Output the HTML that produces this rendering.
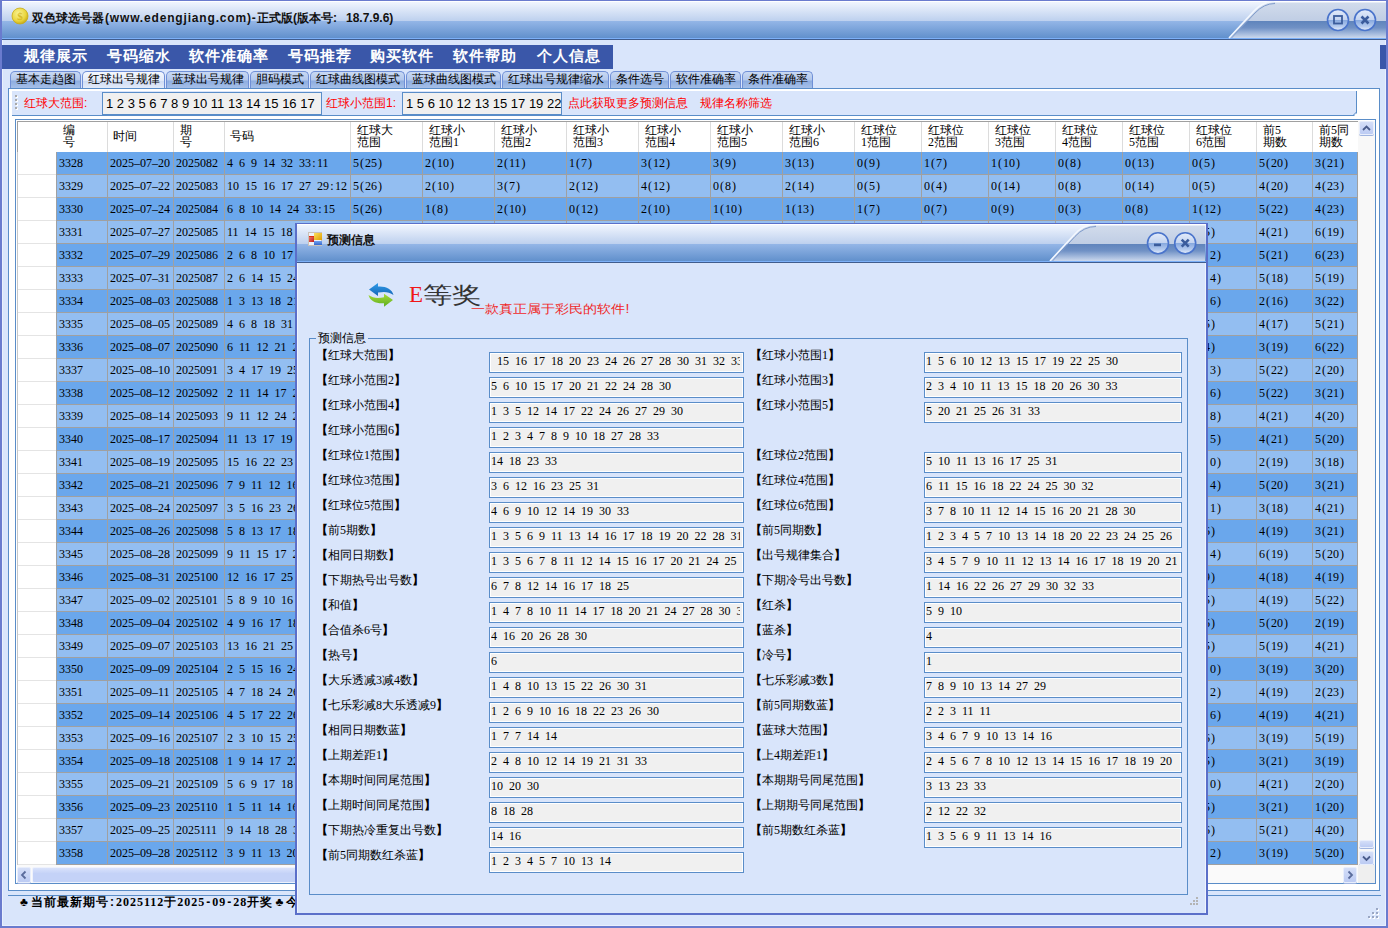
<!DOCTYPE html><html><head><meta charset="utf-8"><title>双色球选号器</title><style>
html,body{margin:0;padding:0;}
em{font-style:normal;font-family:"Liberation Serif",serif;}
body{width:1388px;height:928px;overflow:hidden;position:relative;background:#D9E5FB;font-family:"Liberation Sans",sans-serif;font-size:12px;color:#000;}
div,span.s,span.t,span.m,span.b{position:absolute;box-sizing:border-box;white-space:nowrap;}
span.s{font-family:"Liberation Serif",serif;font-size:12px;line-height:14px;height:14px;}
span.t{font-family:"Liberation Sans",sans-serif;font-size:12px;line-height:14px;}
i{font-style:normal;display:inline-block;width:6px;text-align:center;}
u{text-decoration:none;display:inline-block;width:12px;text-align:center;}
.tab{top:71px;height:18px;border:1px solid #6F8FD6;border-bottom:none;border-radius:5px 5px 0 0;background:linear-gradient(#C9D9F3 0%,#B3C8EC 45%,#8FAEE0 55%,#A9C2EA 100%);font-size:12px;line-height:15px;text-align:center;}
.tab.sel{background:linear-gradient(#F4F7FD 0%,#E2EAF9 50%,#CFDCF4 55%,#E6EDFA 100%);}
.inp{background:#F0F0F0;border:1px solid #5A8DC8;box-shadow:inset 0 0 0 1px #fff;height:21px;overflow:hidden;font-family:"Liberation Serif",serif;font-size:12px;line-height:16px;padding-left:1px;}
.inp b{font-weight:normal;display:block;overflow:hidden;height:19px;}
.lab{font-family:"Liberation Sans",sans-serif;font-size:12px;line-height:14px;height:14px;}
.hd{font-family:"Liberation Sans",sans-serif;font-size:12px;line-height:12px;white-space:normal;}
</style></head><body>
<div style="left:0px;top:0px;width:1388px;height:928px;border:2px solid #6A7BCE;border-top-width:1px;"></div>
<div style="left:2px;top:40px;width:1px;height:886px;background:#E9F0FD;"></div>
<div style="left:1385px;top:40px;width:1px;height:886px;background:#E9F0FD;"></div>
<div style="left:2px;top:925px;width:1384px;height:1px;background:#E9F0FD;"></div>
<div style="left:2px;top:1px;width:1384px;height:1px;background:#fff;"></div>
<div style="left:2px;top:2px;width:1384px;height:19px;background:linear-gradient(#F0F5FE,#BDD0EE);"></div>
<div style="left:2px;top:21px;width:1384px;height:17px;background:linear-gradient(#94B6E7,#6190CC);"></div>
<div style="left:2px;top:38px;width:1384px;height:1px;background:#7CB0F8;"></div>
<div style="left:2px;top:39px;width:1384px;height:1px;background:#3F5C8E;"></div>
<svg style="position:absolute;left:1220px;top:1px" width="166" height="38" viewBox="0 0 166 38">
<defs>
<linearGradient id="pu" x1="0" y1="0" x2="0" y2="1"><stop offset="0" stop-color="#D2DCEC"/><stop offset="1" stop-color="#AFC0DD"/></linearGradient>
<linearGradient id="pl" x1="0" y1="0" x2="0" y2="1"><stop offset="0" stop-color="#5F84BC"/><stop offset="0.4" stop-color="#7091C5"/><stop offset="0.78" stop-color="#A9BEDF"/><stop offset="1" stop-color="#CCD8EC"/></linearGradient>
<radialGradient id="bt" cx="0.5" cy="0.3" r="0.8"><stop offset="0" stop-color="#E4ECFA"/><stop offset="0.55" stop-color="#B5C8EA"/><stop offset="1" stop-color="#8FABDD"/></radialGradient>
<linearGradient id="bb" x1="0" y1="0" x2="0" y2="1"><stop offset="0" stop-color="#E3ECFA"/><stop offset="0.5" stop-color="#C3D3F0"/><stop offset="0.5" stop-color="#86A8DE"/><stop offset="0.8" stop-color="#B4CAEE"/><stop offset="1" stop-color="#E8F0FC"/></linearGradient>
</defs>
<path d="M10 37 L34 11 Q43 1 54 1 L166 1 L166 20 L27 20 Z" fill="url(#pu)"/>
<path d="M10 37 L27 20 L166 20 L166 37 Z" fill="url(#pl)"/>
<path d="M9 37 L34 10 Q43 0.5 54 0.5" fill="none" stroke="#F4F8FF" stroke-width="1.6"/>
<path d="M11.5 37 L35 12 Q44 2.5 55 2.5" fill="none" stroke="#7F9BCB" stroke-width="1"/>
<path d="M55 1.5 L166 1.5" fill="none" stroke="#E6ECF6" stroke-width="1"/>
<circle cx="118" cy="19" r="10.5" fill="url(#bb)" stroke="#4A74CB" stroke-width="1.6"/>
<circle cx="145" cy="19" r="10.5" fill="url(#bb)" stroke="#4A74CB" stroke-width="1.6"/>
<rect x="114" y="15" width="8" height="7.5" fill="none" stroke="#3B5C9C" stroke-width="1.8"/>
<path d="M141.5 15.5 L148.5 22.5 M148.5 15.5 L141.5 22.5" stroke="#3B5C9C" stroke-width="2.6"/>
</svg>
<svg style="position:absolute;left:11px;top:7px" width="18" height="18" viewBox="0 0 18 18">
<defs><radialGradient id="cg" cx="0.4" cy="0.35" r="0.7"><stop offset="0" stop-color="#F8F294"/><stop offset="0.65" stop-color="#EAD63E"/><stop offset="1" stop-color="#C2A412"/></radialGradient></defs>
<circle cx="9" cy="9" r="8" fill="url(#cg)" stroke="#C8AC18" stroke-width="0.8"/>
<text x="9" y="13" font-family="Liberation Serif" font-size="11" font-weight="bold" text-anchor="middle" fill="#D2B420" fill-opacity="0.85">$</text></svg>
<span class="t" style="left:32px;top:11px;font-weight:bold;color:#111;">双色球选号器</span>
<span class="t" style="left:105px;top:11px;font-weight:bold;color:#111;letter-spacing:0.83px;">(www.edengjiang.com)-</span>
<span class="t" style="left:257px;top:11px;font-weight:bold;color:#111;">正式版</span>
<span class="t" style="left:293px;top:11px;font-weight:bold;color:#111;">(版本号:</span>
<span class="t" style="left:346px;top:11px;font-weight:bold;color:#111;">18.7.9.6)</span>
<div style="left:2px;top:45px;width:611px;height:24px;background:#3A57A9;"></div>
<div style="left:1380px;top:45px;width:6px;height:24px;background:#3A57A9;"></div>
<span class="m" style="left:24px;top:46px;font-family:'Liberation Sans',sans-serif;font-weight:bold;font-size:15px;line-height:20px;color:#fff;letter-spacing:1px;">规律展示</span>
<span class="m" style="left:107px;top:46px;font-family:'Liberation Sans',sans-serif;font-weight:bold;font-size:15px;line-height:20px;color:#fff;letter-spacing:1px;">号码缩水</span>
<span class="m" style="left:189px;top:46px;font-family:'Liberation Sans',sans-serif;font-weight:bold;font-size:15px;line-height:20px;color:#fff;letter-spacing:1px;">软件准确率</span>
<span class="m" style="left:288px;top:46px;font-family:'Liberation Sans',sans-serif;font-weight:bold;font-size:15px;line-height:20px;color:#fff;letter-spacing:1px;">号码推荐</span>
<span class="m" style="left:370px;top:46px;font-family:'Liberation Sans',sans-serif;font-weight:bold;font-size:15px;line-height:20px;color:#fff;letter-spacing:1px;">购买软件</span>
<span class="m" style="left:453px;top:46px;font-family:'Liberation Sans',sans-serif;font-weight:bold;font-size:15px;line-height:20px;color:#fff;letter-spacing:1px;">软件帮助</span>
<span class="m" style="left:537px;top:46px;font-family:'Liberation Sans',sans-serif;font-weight:bold;font-size:15px;line-height:20px;color:#fff;letter-spacing:1px;">个人信息</span>
<div class="tab" style="left:10px;width:71px;">基本走趋图</div>
<div class="tab sel" style="left:82px;width:83px;">红球出号规律</div>
<div class="tab" style="left:166px;width:83px;">蓝球出号规律</div>
<div class="tab" style="left:250px;width:59px;">胆码模式</div>
<div class="tab" style="left:310px;width:95px;">红球曲线图模式</div>
<div class="tab" style="left:406px;width:95px;">蓝球曲线图模式</div>
<div class="tab" style="left:502px;width:107px;">红球出号规律缩水</div>
<div class="tab" style="left:610px;width:59px;">条件选号</div>
<div class="tab" style="left:670px;width:71px;">软件准确率</div>
<div class="tab" style="left:742px;width:71px;">条件准确率</div>
<div style="left:8px;top:88px;width:1372px;height:803px;background:#fff;border:1px solid #5A8DC8;"></div>
<div style="left:12px;top:91px;width:1345px;height:25px;background:#D9E5FB;border-right:1px solid #5A8DC8;border-bottom:1px solid #5A8DC8;"></div>
<svg style="position:absolute;left:1352px;top:111px" width="6" height="6" viewBox="0 0 6 6"><path d="M6 1 L6 6 L1 6 Z" fill="#fff"/><path d="M4.5 1 L1 4.5" stroke="#5A8DC8" stroke-width="1" fill="none"/></svg>
<div style="left:16px;top:96px;width:2px;height:2px;background:#fff;"></div>
<div style="left:15px;top:95px;width:2px;height:2px;background:#A9A9A9;"></div>
<div style="left:16px;top:100px;width:2px;height:2px;background:#fff;"></div>
<div style="left:15px;top:99px;width:2px;height:2px;background:#A9A9A9;"></div>
<div style="left:16px;top:104px;width:2px;height:2px;background:#fff;"></div>
<div style="left:15px;top:103px;width:2px;height:2px;background:#A9A9A9;"></div>
<div style="left:16px;top:108px;width:2px;height:2px;background:#fff;"></div>
<div style="left:15px;top:107px;width:2px;height:2px;background:#A9A9A9;"></div>
<span class="t" style="left:24px;top:96px;color:#F00;">红球大范围:</span>
<div style="left:102px;top:92px;width:220px;height:23px;background:#F0F0F0;border:1px solid #5A8DC8;font-size:13px;line-height:21px;padding-left:3px;">1 2 3 5 6 7 8 9 10 11 13 14 15 16 17</div>
<span class="t" style="left:326px;top:96px;color:#F00;">红球小范围1:</span>
<div style="left:402px;top:92px;width:160px;height:23px;background:#F0F0F0;border:1px solid #5A8DC8;font-size:13px;line-height:21px;padding-left:3px;overflow:hidden;">1 5 6 10 12 13 15 17 19 22 25</div>
<span class="t" style="left:568px;top:96px;color:#F00;">点此获取更多预测信息</span>
<span class="t" style="left:700px;top:96px;color:#F00;">规律名称筛选</span>
<div style="left:15px;top:119px;width:1361px;height:765px;border:1px solid #5A8DC8;background:#fff;"></div>
<div style="left:17px;top:121px;width:1341px;height:1px;background:#A0A0A0;"></div>
<div style="left:17px;top:121px;width:1px;height:31px;background:#A0A0A0;"></div>
<div style="left:17px;top:152px;width:1px;height:713px;background:#C8C8C8;"></div>
<div class="hd" style="left:63px;top:124px;width:12px;">编号</div>
<div class="hd" style="left:113px;top:130px;">时间</div>
<div class="hd" style="left:180px;top:124px;width:12px;">期号</div>
<div class="hd" style="left:230px;top:130px;">号码</div>
<div class="hd" style="left:357px;top:124px;">红球大<br>范围</div>
<div class="hd" style="left:429px;top:124px;">红球小<br>范围<em>1</em></div>
<div class="hd" style="left:501px;top:124px;">红球小<br>范围<em>2</em></div>
<div class="hd" style="left:573px;top:124px;">红球小<br>范围<em>3</em></div>
<div class="hd" style="left:645px;top:124px;">红球小<br>范围<em>4</em></div>
<div class="hd" style="left:717px;top:124px;">红球小<br>范围<em>5</em></div>
<div class="hd" style="left:789px;top:124px;">红球小<br>范围<em>6</em></div>
<div class="hd" style="left:861px;top:124px;">红球位<br><em>1</em>范围</div>
<div class="hd" style="left:928px;top:124px;">红球位<br><em>2</em>范围</div>
<div class="hd" style="left:995px;top:124px;">红球位<br><em>3</em>范围</div>
<div class="hd" style="left:1062px;top:124px;">红球位<br><em>4</em>范围</div>
<div class="hd" style="left:1129px;top:124px;">红球位<br><em>5</em>范围</div>
<div class="hd" style="left:1196px;top:124px;">红球位<br><em>6</em>范围</div>
<div class="hd" style="left:1263px;top:124px;">前<em>5</em><br>期数</div>
<div class="hd" style="left:1319px;top:124px;">前<em>5</em>同<br>期数</div>
<div style="left:107px;top:122px;width:1px;height:30px;background:#DCDCDC;"></div>
<div style="left:173px;top:122px;width:1px;height:30px;background:#DCDCDC;"></div>
<div style="left:224px;top:122px;width:1px;height:30px;background:#DCDCDC;"></div>
<div style="left:350px;top:122px;width:1px;height:30px;background:#DCDCDC;"></div>
<div style="left:422px;top:122px;width:1px;height:30px;background:#DCDCDC;"></div>
<div style="left:494px;top:122px;width:1px;height:30px;background:#DCDCDC;"></div>
<div style="left:566px;top:122px;width:1px;height:30px;background:#DCDCDC;"></div>
<div style="left:638px;top:122px;width:1px;height:30px;background:#DCDCDC;"></div>
<div style="left:710px;top:122px;width:1px;height:30px;background:#DCDCDC;"></div>
<div style="left:782px;top:122px;width:1px;height:30px;background:#DCDCDC;"></div>
<div style="left:854px;top:122px;width:1px;height:30px;background:#DCDCDC;"></div>
<div style="left:921px;top:122px;width:1px;height:30px;background:#DCDCDC;"></div>
<div style="left:988px;top:122px;width:1px;height:30px;background:#DCDCDC;"></div>
<div style="left:1055px;top:122px;width:1px;height:30px;background:#DCDCDC;"></div>
<div style="left:1122px;top:122px;width:1px;height:30px;background:#DCDCDC;"></div>
<div style="left:1189px;top:122px;width:1px;height:30px;background:#DCDCDC;"></div>
<div style="left:1256px;top:122px;width:1px;height:30px;background:#DCDCDC;"></div>
<div style="left:1312px;top:122px;width:1px;height:30px;background:#DCDCDC;"></div>
<div style="left:56px;top:152px;width:1302px;height:23px;background:#6AA7EC;border-bottom:1px solid #A0A0A0;"></div>
<div style="left:18px;top:174px;width:38px;height:1px;background:#E4E4E4;"></div>
<span class="s" style="left:59px;top:156px;">3328</span>
<span class="s" style="left:110px;top:156px;">2025–07–20</span>
<span class="s" style="left:176px;top:156px;">2025082</span>
<span class="s" style="left:227px;top:156px;">4<i>&nbsp;</i>6<i>&nbsp;</i>9<i>&nbsp;</i>14<i>&nbsp;</i>32<i>&nbsp;</i>33<i>:</i>11</span>
<span class="s" style="left:353px;top:156px;">5<i>(</i>25<i>)</i></span>
<span class="s" style="left:425px;top:156px;">2<i>(</i>10<i>)</i></span>
<span class="s" style="left:497px;top:156px;">2<i>(</i>11<i>)</i></span>
<span class="s" style="left:569px;top:156px;">1<i>(</i>7<i>)</i></span>
<span class="s" style="left:641px;top:156px;">3<i>(</i>12<i>)</i></span>
<span class="s" style="left:713px;top:156px;">3<i>(</i>9<i>)</i></span>
<span class="s" style="left:785px;top:156px;">3<i>(</i>13<i>)</i></span>
<span class="s" style="left:857px;top:156px;">0<i>(</i>9<i>)</i></span>
<span class="s" style="left:924px;top:156px;">1<i>(</i>7<i>)</i></span>
<span class="s" style="left:991px;top:156px;">1<i>(</i>10<i>)</i></span>
<span class="s" style="left:1058px;top:156px;">0<i>(</i>8<i>)</i></span>
<span class="s" style="left:1125px;top:156px;">0<i>(</i>13<i>)</i></span>
<span class="s" style="left:1192px;top:156px;">0<i>(</i>5<i>)</i></span>
<span class="s" style="left:1259px;top:156px;">5<i>(</i>20<i>)</i></span>
<span class="s" style="left:1315px;top:156px;">3<i>(</i>21<i>)</i></span>
<div style="left:56px;top:175px;width:1302px;height:23px;background:#93BEF1;border-bottom:1px solid #A0A0A0;"></div>
<div style="left:18px;top:197px;width:38px;height:1px;background:#E4E4E4;"></div>
<span class="s" style="left:59px;top:179px;">3329</span>
<span class="s" style="left:110px;top:179px;">2025–07–22</span>
<span class="s" style="left:176px;top:179px;">2025083</span>
<span class="s" style="left:227px;top:179px;">10<i>&nbsp;</i>15<i>&nbsp;</i>16<i>&nbsp;</i>17<i>&nbsp;</i>27<i>&nbsp;</i>29<i>:</i>12</span>
<span class="s" style="left:353px;top:179px;">5<i>(</i>26<i>)</i></span>
<span class="s" style="left:425px;top:179px;">2<i>(</i>10<i>)</i></span>
<span class="s" style="left:497px;top:179px;">3<i>(</i>7<i>)</i></span>
<span class="s" style="left:569px;top:179px;">2<i>(</i>12<i>)</i></span>
<span class="s" style="left:641px;top:179px;">4<i>(</i>12<i>)</i></span>
<span class="s" style="left:713px;top:179px;">0<i>(</i>8<i>)</i></span>
<span class="s" style="left:785px;top:179px;">2<i>(</i>14<i>)</i></span>
<span class="s" style="left:857px;top:179px;">0<i>(</i>5<i>)</i></span>
<span class="s" style="left:924px;top:179px;">0<i>(</i>4<i>)</i></span>
<span class="s" style="left:991px;top:179px;">0<i>(</i>14<i>)</i></span>
<span class="s" style="left:1058px;top:179px;">0<i>(</i>8<i>)</i></span>
<span class="s" style="left:1125px;top:179px;">0<i>(</i>14<i>)</i></span>
<span class="s" style="left:1192px;top:179px;">0<i>(</i>5<i>)</i></span>
<span class="s" style="left:1259px;top:179px;">4<i>(</i>20<i>)</i></span>
<span class="s" style="left:1315px;top:179px;">4<i>(</i>23<i>)</i></span>
<div style="left:56px;top:198px;width:1302px;height:23px;background:#6AA7EC;border-bottom:1px solid #A0A0A0;"></div>
<div style="left:18px;top:220px;width:38px;height:1px;background:#E4E4E4;"></div>
<span class="s" style="left:59px;top:202px;">3330</span>
<span class="s" style="left:110px;top:202px;">2025–07–24</span>
<span class="s" style="left:176px;top:202px;">2025084</span>
<span class="s" style="left:227px;top:202px;">6<i>&nbsp;</i>8<i>&nbsp;</i>10<i>&nbsp;</i>14<i>&nbsp;</i>24<i>&nbsp;</i>33<i>:</i>15</span>
<span class="s" style="left:353px;top:202px;">5<i>(</i>26<i>)</i></span>
<span class="s" style="left:425px;top:202px;">1<i>(</i>8<i>)</i></span>
<span class="s" style="left:497px;top:202px;">2<i>(</i>10<i>)</i></span>
<span class="s" style="left:569px;top:202px;">0<i>(</i>12<i>)</i></span>
<span class="s" style="left:641px;top:202px;">2<i>(</i>10<i>)</i></span>
<span class="s" style="left:713px;top:202px;">1<i>(</i>10<i>)</i></span>
<span class="s" style="left:785px;top:202px;">1<i>(</i>13<i>)</i></span>
<span class="s" style="left:857px;top:202px;">1<i>(</i>7<i>)</i></span>
<span class="s" style="left:924px;top:202px;">0<i>(</i>7<i>)</i></span>
<span class="s" style="left:991px;top:202px;">0<i>(</i>9<i>)</i></span>
<span class="s" style="left:1058px;top:202px;">0<i>(</i>3<i>)</i></span>
<span class="s" style="left:1125px;top:202px;">0<i>(</i>8<i>)</i></span>
<span class="s" style="left:1192px;top:202px;">1<i>(</i>12<i>)</i></span>
<span class="s" style="left:1259px;top:202px;">5<i>(</i>22<i>)</i></span>
<span class="s" style="left:1315px;top:202px;">4<i>(</i>23<i>)</i></span>
<div style="left:56px;top:221px;width:1302px;height:23px;background:#93BEF1;border-bottom:1px solid #A0A0A0;"></div>
<div style="left:18px;top:243px;width:38px;height:1px;background:#E4E4E4;"></div>
<span class="s" style="left:59px;top:225px;">3331</span>
<span class="s" style="left:110px;top:225px;">2025–07–27</span>
<span class="s" style="left:176px;top:225px;">2025085</span>
<span class="s" style="left:227px;top:225px;">11<i>&nbsp;</i>14<i>&nbsp;</i>15<i>&nbsp;</i>18<i>&nbsp;</i>22<i>&nbsp;</i>31<i>:</i>05</span>
<span class="s" style="left:1192px;top:225px;">0<i>(</i>5<i>)</i></span>
<span class="s" style="left:1259px;top:225px;">4<i>(</i>21<i>)</i></span>
<span class="s" style="left:1315px;top:225px;">6<i>(</i>19<i>)</i></span>
<div style="left:56px;top:244px;width:1302px;height:23px;background:#6AA7EC;border-bottom:1px solid #A0A0A0;"></div>
<div style="left:18px;top:266px;width:38px;height:1px;background:#E4E4E4;"></div>
<span class="s" style="left:59px;top:248px;">3332</span>
<span class="s" style="left:110px;top:248px;">2025–07–29</span>
<span class="s" style="left:176px;top:248px;">2025086</span>
<span class="s" style="left:227px;top:248px;">2<i>&nbsp;</i>6<i>&nbsp;</i>8<i>&nbsp;</i>10<i>&nbsp;</i>17<i>&nbsp;</i>21<i>:</i>09</span>
<span class="s" style="left:1192px;top:248px;"><i>&nbsp;</i><i>&nbsp;</i><i>&nbsp;</i>2<i>)</i></span>
<span class="s" style="left:1259px;top:248px;">5<i>(</i>21<i>)</i></span>
<span class="s" style="left:1315px;top:248px;">6<i>(</i>23<i>)</i></span>
<div style="left:56px;top:267px;width:1302px;height:23px;background:#93BEF1;border-bottom:1px solid #A0A0A0;"></div>
<div style="left:18px;top:289px;width:38px;height:1px;background:#E4E4E4;"></div>
<span class="s" style="left:59px;top:271px;">3333</span>
<span class="s" style="left:110px;top:271px;">2025–07–31</span>
<span class="s" style="left:176px;top:271px;">2025087</span>
<span class="s" style="left:227px;top:271px;">2<i>&nbsp;</i>6<i>&nbsp;</i>14<i>&nbsp;</i>15<i>&nbsp;</i>24<i>&nbsp;</i>30<i>:</i>12</span>
<span class="s" style="left:1192px;top:271px;"><i>&nbsp;</i><i>&nbsp;</i><i>&nbsp;</i>4<i>)</i></span>
<span class="s" style="left:1259px;top:271px;">5<i>(</i>18<i>)</i></span>
<span class="s" style="left:1315px;top:271px;">5<i>(</i>19<i>)</i></span>
<div style="left:56px;top:290px;width:1302px;height:23px;background:#6AA7EC;border-bottom:1px solid #A0A0A0;"></div>
<div style="left:18px;top:312px;width:38px;height:1px;background:#E4E4E4;"></div>
<span class="s" style="left:59px;top:294px;">3334</span>
<span class="s" style="left:110px;top:294px;">2025–08–03</span>
<span class="s" style="left:176px;top:294px;">2025088</span>
<span class="s" style="left:227px;top:294px;">1<i>&nbsp;</i>3<i>&nbsp;</i>13<i>&nbsp;</i>18<i>&nbsp;</i>21<i>&nbsp;</i>28<i>:</i>07</span>
<span class="s" style="left:1192px;top:294px;"><i>&nbsp;</i><i>&nbsp;</i><i>&nbsp;</i>6<i>)</i></span>
<span class="s" style="left:1259px;top:294px;">2<i>(</i>16<i>)</i></span>
<span class="s" style="left:1315px;top:294px;">3<i>(</i>22<i>)</i></span>
<div style="left:56px;top:313px;width:1302px;height:23px;background:#93BEF1;border-bottom:1px solid #A0A0A0;"></div>
<div style="left:18px;top:335px;width:38px;height:1px;background:#E4E4E4;"></div>
<span class="s" style="left:59px;top:317px;">3335</span>
<span class="s" style="left:110px;top:317px;">2025–08–05</span>
<span class="s" style="left:176px;top:317px;">2025089</span>
<span class="s" style="left:227px;top:317px;">4<i>&nbsp;</i>6<i>&nbsp;</i>8<i>&nbsp;</i>18<i>&nbsp;</i>31<i>&nbsp;</i>33<i>:</i>02</span>
<span class="s" style="left:1192px;top:317px;">0<i>(</i>5<i>)</i></span>
<span class="s" style="left:1259px;top:317px;">4<i>(</i>17<i>)</i></span>
<span class="s" style="left:1315px;top:317px;">5<i>(</i>21<i>)</i></span>
<div style="left:56px;top:336px;width:1302px;height:23px;background:#6AA7EC;border-bottom:1px solid #A0A0A0;"></div>
<div style="left:18px;top:358px;width:38px;height:1px;background:#E4E4E4;"></div>
<span class="s" style="left:59px;top:340px;">3336</span>
<span class="s" style="left:110px;top:340px;">2025–08–07</span>
<span class="s" style="left:176px;top:340px;">2025090</span>
<span class="s" style="left:227px;top:340px;">6<i>&nbsp;</i>11<i>&nbsp;</i>12<i>&nbsp;</i>21<i>&nbsp;</i>26<i>&nbsp;</i>30<i>:</i>14</span>
<span class="s" style="left:1192px;top:340px;">0<i>(</i>4<i>)</i></span>
<span class="s" style="left:1259px;top:340px;">3<i>(</i>19<i>)</i></span>
<span class="s" style="left:1315px;top:340px;">6<i>(</i>22<i>)</i></span>
<div style="left:56px;top:359px;width:1302px;height:23px;background:#93BEF1;border-bottom:1px solid #A0A0A0;"></div>
<div style="left:18px;top:381px;width:38px;height:1px;background:#E4E4E4;"></div>
<span class="s" style="left:59px;top:363px;">3337</span>
<span class="s" style="left:110px;top:363px;">2025–08–10</span>
<span class="s" style="left:176px;top:363px;">2025091</span>
<span class="s" style="left:227px;top:363px;">3<i>&nbsp;</i>4<i>&nbsp;</i>17<i>&nbsp;</i>19<i>&nbsp;</i>25<i>&nbsp;</i>29<i>:</i>08</span>
<span class="s" style="left:1192px;top:363px;"><i>&nbsp;</i><i>&nbsp;</i><i>&nbsp;</i>3<i>)</i></span>
<span class="s" style="left:1259px;top:363px;">5<i>(</i>22<i>)</i></span>
<span class="s" style="left:1315px;top:363px;">2<i>(</i>20<i>)</i></span>
<div style="left:56px;top:382px;width:1302px;height:23px;background:#6AA7EC;border-bottom:1px solid #A0A0A0;"></div>
<div style="left:18px;top:404px;width:38px;height:1px;background:#E4E4E4;"></div>
<span class="s" style="left:59px;top:386px;">3338</span>
<span class="s" style="left:110px;top:386px;">2025–08–12</span>
<span class="s" style="left:176px;top:386px;">2025092</span>
<span class="s" style="left:227px;top:386px;">2<i>&nbsp;</i>11<i>&nbsp;</i>14<i>&nbsp;</i>17<i>&nbsp;</i>23<i>&nbsp;</i>32<i>:</i>01</span>
<span class="s" style="left:1192px;top:386px;"><i>&nbsp;</i><i>&nbsp;</i><i>&nbsp;</i>6<i>)</i></span>
<span class="s" style="left:1259px;top:386px;">5<i>(</i>22<i>)</i></span>
<span class="s" style="left:1315px;top:386px;">3<i>(</i>21<i>)</i></span>
<div style="left:56px;top:405px;width:1302px;height:23px;background:#93BEF1;border-bottom:1px solid #A0A0A0;"></div>
<div style="left:18px;top:427px;width:38px;height:1px;background:#E4E4E4;"></div>
<span class="s" style="left:59px;top:409px;">3339</span>
<span class="s" style="left:110px;top:409px;">2025–08–14</span>
<span class="s" style="left:176px;top:409px;">2025093</span>
<span class="s" style="left:227px;top:409px;">9<i>&nbsp;</i>11<i>&nbsp;</i>12<i>&nbsp;</i>24<i>&nbsp;</i>27<i>&nbsp;</i>30<i>:</i>16</span>
<span class="s" style="left:1192px;top:409px;"><i>&nbsp;</i><i>&nbsp;</i><i>&nbsp;</i>8<i>)</i></span>
<span class="s" style="left:1259px;top:409px;">4<i>(</i>21<i>)</i></span>
<span class="s" style="left:1315px;top:409px;">4<i>(</i>20<i>)</i></span>
<div style="left:56px;top:428px;width:1302px;height:23px;background:#6AA7EC;border-bottom:1px solid #A0A0A0;"></div>
<div style="left:18px;top:450px;width:38px;height:1px;background:#E4E4E4;"></div>
<span class="s" style="left:59px;top:432px;">3340</span>
<span class="s" style="left:110px;top:432px;">2025–08–17</span>
<span class="s" style="left:176px;top:432px;">2025094</span>
<span class="s" style="left:227px;top:432px;">11<i>&nbsp;</i>13<i>&nbsp;</i>17<i>&nbsp;</i>19<i>&nbsp;</i>23<i>&nbsp;</i>32<i>:</i>04</span>
<span class="s" style="left:1192px;top:432px;"><i>&nbsp;</i><i>&nbsp;</i><i>&nbsp;</i>5<i>)</i></span>
<span class="s" style="left:1259px;top:432px;">4<i>(</i>21<i>)</i></span>
<span class="s" style="left:1315px;top:432px;">5<i>(</i>20<i>)</i></span>
<div style="left:56px;top:451px;width:1302px;height:23px;background:#93BEF1;border-bottom:1px solid #A0A0A0;"></div>
<div style="left:18px;top:473px;width:38px;height:1px;background:#E4E4E4;"></div>
<span class="s" style="left:59px;top:455px;">3341</span>
<span class="s" style="left:110px;top:455px;">2025–08–19</span>
<span class="s" style="left:176px;top:455px;">2025095</span>
<span class="s" style="left:227px;top:455px;">15<i>&nbsp;</i>16<i>&nbsp;</i>22<i>&nbsp;</i>23<i>&nbsp;</i>27<i>&nbsp;</i>31<i>:</i>10</span>
<span class="s" style="left:1192px;top:455px;"><i>&nbsp;</i><i>&nbsp;</i><i>&nbsp;</i>0<i>)</i></span>
<span class="s" style="left:1259px;top:455px;">2<i>(</i>19<i>)</i></span>
<span class="s" style="left:1315px;top:455px;">3<i>(</i>18<i>)</i></span>
<div style="left:56px;top:474px;width:1302px;height:23px;background:#6AA7EC;border-bottom:1px solid #A0A0A0;"></div>
<div style="left:18px;top:496px;width:38px;height:1px;background:#E4E4E4;"></div>
<span class="s" style="left:59px;top:478px;">3342</span>
<span class="s" style="left:110px;top:478px;">2025–08–21</span>
<span class="s" style="left:176px;top:478px;">2025096</span>
<span class="s" style="left:227px;top:478px;">7<i>&nbsp;</i>9<i>&nbsp;</i>11<i>&nbsp;</i>12<i>&nbsp;</i>16<i>&nbsp;</i>28<i>:</i>03</span>
<span class="s" style="left:1192px;top:478px;"><i>&nbsp;</i><i>&nbsp;</i><i>&nbsp;</i>4<i>)</i></span>
<span class="s" style="left:1259px;top:478px;">5<i>(</i>20<i>)</i></span>
<span class="s" style="left:1315px;top:478px;">3<i>(</i>21<i>)</i></span>
<div style="left:56px;top:497px;width:1302px;height:23px;background:#93BEF1;border-bottom:1px solid #A0A0A0;"></div>
<div style="left:18px;top:519px;width:38px;height:1px;background:#E4E4E4;"></div>
<span class="s" style="left:59px;top:501px;">3343</span>
<span class="s" style="left:110px;top:501px;">2025–08–24</span>
<span class="s" style="left:176px;top:501px;">2025097</span>
<span class="s" style="left:227px;top:501px;">3<i>&nbsp;</i>5<i>&nbsp;</i>16<i>&nbsp;</i>23<i>&nbsp;</i>26<i>&nbsp;</i>30<i>:</i>11</span>
<span class="s" style="left:1192px;top:501px;"><i>&nbsp;</i><i>&nbsp;</i><i>&nbsp;</i>1<i>)</i></span>
<span class="s" style="left:1259px;top:501px;">3<i>(</i>18<i>)</i></span>
<span class="s" style="left:1315px;top:501px;">4<i>(</i>21<i>)</i></span>
<div style="left:56px;top:520px;width:1302px;height:23px;background:#6AA7EC;border-bottom:1px solid #A0A0A0;"></div>
<div style="left:18px;top:542px;width:38px;height:1px;background:#E4E4E4;"></div>
<span class="s" style="left:59px;top:524px;">3344</span>
<span class="s" style="left:110px;top:524px;">2025–08–26</span>
<span class="s" style="left:176px;top:524px;">2025098</span>
<span class="s" style="left:227px;top:524px;">5<i>&nbsp;</i>8<i>&nbsp;</i>13<i>&nbsp;</i>17<i>&nbsp;</i>18<i>&nbsp;</i>25<i>:</i>06</span>
<span class="s" style="left:1192px;top:524px;">0<i>(</i>6<i>)</i></span>
<span class="s" style="left:1259px;top:524px;">4<i>(</i>19<i>)</i></span>
<span class="s" style="left:1315px;top:524px;">3<i>(</i>21<i>)</i></span>
<div style="left:56px;top:543px;width:1302px;height:23px;background:#93BEF1;border-bottom:1px solid #A0A0A0;"></div>
<div style="left:18px;top:565px;width:38px;height:1px;background:#E4E4E4;"></div>
<span class="s" style="left:59px;top:547px;">3345</span>
<span class="s" style="left:110px;top:547px;">2025–08–28</span>
<span class="s" style="left:176px;top:547px;">2025099</span>
<span class="s" style="left:227px;top:547px;">9<i>&nbsp;</i>11<i>&nbsp;</i>15<i>&nbsp;</i>17<i>&nbsp;</i>22<i>&nbsp;</i>30<i>:</i>13</span>
<span class="s" style="left:1192px;top:547px;"><i>&nbsp;</i><i>&nbsp;</i><i>&nbsp;</i>4<i>)</i></span>
<span class="s" style="left:1259px;top:547px;">6<i>(</i>19<i>)</i></span>
<span class="s" style="left:1315px;top:547px;">5<i>(</i>20<i>)</i></span>
<div style="left:56px;top:566px;width:1302px;height:23px;background:#6AA7EC;border-bottom:1px solid #A0A0A0;"></div>
<div style="left:18px;top:588px;width:38px;height:1px;background:#E4E4E4;"></div>
<span class="s" style="left:59px;top:570px;">3346</span>
<span class="s" style="left:110px;top:570px;">2025–08–31</span>
<span class="s" style="left:176px;top:570px;">2025100</span>
<span class="s" style="left:227px;top:570px;">12<i>&nbsp;</i>16<i>&nbsp;</i>17<i>&nbsp;</i>25<i>&nbsp;</i>28<i>&nbsp;</i>33<i>:</i>02</span>
<span class="s" style="left:1192px;top:570px;">0<i>(</i>9<i>)</i></span>
<span class="s" style="left:1259px;top:570px;">4<i>(</i>18<i>)</i></span>
<span class="s" style="left:1315px;top:570px;">4<i>(</i>19<i>)</i></span>
<div style="left:56px;top:589px;width:1302px;height:23px;background:#93BEF1;border-bottom:1px solid #A0A0A0;"></div>
<div style="left:18px;top:611px;width:38px;height:1px;background:#E4E4E4;"></div>
<span class="s" style="left:59px;top:593px;">3347</span>
<span class="s" style="left:110px;top:593px;">2025–09–02</span>
<span class="s" style="left:176px;top:593px;">2025101</span>
<span class="s" style="left:227px;top:593px;">5<i>&nbsp;</i>8<i>&nbsp;</i>9<i>&nbsp;</i>10<i>&nbsp;</i>16<i>&nbsp;</i>27<i>:</i>15</span>
<span class="s" style="left:1192px;top:593px;">0<i>(</i>5<i>)</i></span>
<span class="s" style="left:1259px;top:593px;">4<i>(</i>19<i>)</i></span>
<span class="s" style="left:1315px;top:593px;">5<i>(</i>22<i>)</i></span>
<div style="left:56px;top:612px;width:1302px;height:23px;background:#6AA7EC;border-bottom:1px solid #A0A0A0;"></div>
<div style="left:18px;top:634px;width:38px;height:1px;background:#E4E4E4;"></div>
<span class="s" style="left:59px;top:616px;">3348</span>
<span class="s" style="left:110px;top:616px;">2025–09–04</span>
<span class="s" style="left:176px;top:616px;">2025102</span>
<span class="s" style="left:227px;top:616px;">4<i>&nbsp;</i>9<i>&nbsp;</i>16<i>&nbsp;</i>17<i>&nbsp;</i>18<i>&nbsp;</i>29<i>:</i>07</span>
<span class="s" style="left:1192px;top:616px;">0<i>(</i>6<i>)</i></span>
<span class="s" style="left:1259px;top:616px;">5<i>(</i>20<i>)</i></span>
<span class="s" style="left:1315px;top:616px;">2<i>(</i>19<i>)</i></span>
<div style="left:56px;top:635px;width:1302px;height:23px;background:#93BEF1;border-bottom:1px solid #A0A0A0;"></div>
<div style="left:18px;top:657px;width:38px;height:1px;background:#E4E4E4;"></div>
<span class="s" style="left:59px;top:639px;">3349</span>
<span class="s" style="left:110px;top:639px;">2025–09–07</span>
<span class="s" style="left:176px;top:639px;">2025103</span>
<span class="s" style="left:227px;top:639px;">13<i>&nbsp;</i>16<i>&nbsp;</i>21<i>&nbsp;</i>25<i>&nbsp;</i>29<i>&nbsp;</i>32<i>:</i>09</span>
<span class="s" style="left:1192px;top:639px;">0<i>(</i>5<i>)</i></span>
<span class="s" style="left:1259px;top:639px;">5<i>(</i>19<i>)</i></span>
<span class="s" style="left:1315px;top:639px;">4<i>(</i>21<i>)</i></span>
<div style="left:56px;top:658px;width:1302px;height:23px;background:#6AA7EC;border-bottom:1px solid #A0A0A0;"></div>
<div style="left:18px;top:680px;width:38px;height:1px;background:#E4E4E4;"></div>
<span class="s" style="left:59px;top:662px;">3350</span>
<span class="s" style="left:110px;top:662px;">2025–09–09</span>
<span class="s" style="left:176px;top:662px;">2025104</span>
<span class="s" style="left:227px;top:662px;">2<i>&nbsp;</i>5<i>&nbsp;</i>15<i>&nbsp;</i>16<i>&nbsp;</i>24<i>&nbsp;</i>31<i>:</i>12</span>
<span class="s" style="left:1192px;top:662px;"><i>&nbsp;</i><i>&nbsp;</i><i>&nbsp;</i>0<i>)</i></span>
<span class="s" style="left:1259px;top:662px;">3<i>(</i>19<i>)</i></span>
<span class="s" style="left:1315px;top:662px;">3<i>(</i>20<i>)</i></span>
<div style="left:56px;top:681px;width:1302px;height:23px;background:#93BEF1;border-bottom:1px solid #A0A0A0;"></div>
<div style="left:18px;top:703px;width:38px;height:1px;background:#E4E4E4;"></div>
<span class="s" style="left:59px;top:685px;">3351</span>
<span class="s" style="left:110px;top:685px;">2025–09–11</span>
<span class="s" style="left:176px;top:685px;">2025105</span>
<span class="s" style="left:227px;top:685px;">4<i>&nbsp;</i>7<i>&nbsp;</i>18<i>&nbsp;</i>24<i>&nbsp;</i>26<i>&nbsp;</i>30<i>:</i>05</span>
<span class="s" style="left:1192px;top:685px;"><i>&nbsp;</i><i>&nbsp;</i><i>&nbsp;</i>2<i>)</i></span>
<span class="s" style="left:1259px;top:685px;">4<i>(</i>19<i>)</i></span>
<span class="s" style="left:1315px;top:685px;">2<i>(</i>23<i>)</i></span>
<div style="left:56px;top:704px;width:1302px;height:23px;background:#6AA7EC;border-bottom:1px solid #A0A0A0;"></div>
<div style="left:18px;top:726px;width:38px;height:1px;background:#E4E4E4;"></div>
<span class="s" style="left:59px;top:708px;">3352</span>
<span class="s" style="left:110px;top:708px;">2025–09–14</span>
<span class="s" style="left:176px;top:708px;">2025106</span>
<span class="s" style="left:227px;top:708px;">4<i>&nbsp;</i>5<i>&nbsp;</i>17<i>&nbsp;</i>22<i>&nbsp;</i>26<i>&nbsp;</i>33<i>:</i>08</span>
<span class="s" style="left:1192px;top:708px;"><i>&nbsp;</i><i>&nbsp;</i><i>&nbsp;</i>6<i>)</i></span>
<span class="s" style="left:1259px;top:708px;">4<i>(</i>19<i>)</i></span>
<span class="s" style="left:1315px;top:708px;">4<i>(</i>21<i>)</i></span>
<div style="left:56px;top:727px;width:1302px;height:23px;background:#93BEF1;border-bottom:1px solid #A0A0A0;"></div>
<div style="left:18px;top:749px;width:38px;height:1px;background:#E4E4E4;"></div>
<span class="s" style="left:59px;top:731px;">3353</span>
<span class="s" style="left:110px;top:731px;">2025–09–16</span>
<span class="s" style="left:176px;top:731px;">2025107</span>
<span class="s" style="left:227px;top:731px;">2<i>&nbsp;</i>3<i>&nbsp;</i>10<i>&nbsp;</i>15<i>&nbsp;</i>25<i>&nbsp;</i>28<i>:</i>14</span>
<span class="s" style="left:1192px;top:731px;">0<i>(</i>6<i>)</i></span>
<span class="s" style="left:1259px;top:731px;">3<i>(</i>19<i>)</i></span>
<span class="s" style="left:1315px;top:731px;">5<i>(</i>19<i>)</i></span>
<div style="left:56px;top:750px;width:1302px;height:23px;background:#6AA7EC;border-bottom:1px solid #A0A0A0;"></div>
<div style="left:18px;top:772px;width:38px;height:1px;background:#E4E4E4;"></div>
<span class="s" style="left:59px;top:754px;">3354</span>
<span class="s" style="left:110px;top:754px;">2025–09–18</span>
<span class="s" style="left:176px;top:754px;">2025108</span>
<span class="s" style="left:227px;top:754px;">1<i>&nbsp;</i>9<i>&nbsp;</i>14<i>&nbsp;</i>17<i>&nbsp;</i>22<i>&nbsp;</i>31<i>:</i>03</span>
<span class="s" style="left:1192px;top:754px;">0<i>(</i>5<i>)</i></span>
<span class="s" style="left:1259px;top:754px;">3<i>(</i>21<i>)</i></span>
<span class="s" style="left:1315px;top:754px;">3<i>(</i>19<i>)</i></span>
<div style="left:56px;top:773px;width:1302px;height:23px;background:#93BEF1;border-bottom:1px solid #A0A0A0;"></div>
<div style="left:18px;top:795px;width:38px;height:1px;background:#E4E4E4;"></div>
<span class="s" style="left:59px;top:777px;">3355</span>
<span class="s" style="left:110px;top:777px;">2025–09–21</span>
<span class="s" style="left:176px;top:777px;">2025109</span>
<span class="s" style="left:227px;top:777px;">5<i>&nbsp;</i>6<i>&nbsp;</i>9<i>&nbsp;</i>17<i>&nbsp;</i>18<i>&nbsp;</i>27<i>:</i>11</span>
<span class="s" style="left:1192px;top:777px;"><i>&nbsp;</i><i>&nbsp;</i><i>&nbsp;</i>0<i>)</i></span>
<span class="s" style="left:1259px;top:777px;">4<i>(</i>21<i>)</i></span>
<span class="s" style="left:1315px;top:777px;">2<i>(</i>20<i>)</i></span>
<div style="left:56px;top:796px;width:1302px;height:23px;background:#6AA7EC;border-bottom:1px solid #A0A0A0;"></div>
<div style="left:18px;top:818px;width:38px;height:1px;background:#E4E4E4;"></div>
<span class="s" style="left:59px;top:800px;">3356</span>
<span class="s" style="left:110px;top:800px;">2025–09–23</span>
<span class="s" style="left:176px;top:800px;">2025110</span>
<span class="s" style="left:227px;top:800px;">1<i>&nbsp;</i>5<i>&nbsp;</i>11<i>&nbsp;</i>14<i>&nbsp;</i>16<i>&nbsp;</i>29<i>:</i>06</span>
<span class="s" style="left:1192px;top:800px;">0<i>(</i>5<i>)</i></span>
<span class="s" style="left:1259px;top:800px;">3<i>(</i>21<i>)</i></span>
<span class="s" style="left:1315px;top:800px;">1<i>(</i>20<i>)</i></span>
<div style="left:56px;top:819px;width:1302px;height:23px;background:#93BEF1;border-bottom:1px solid #A0A0A0;"></div>
<div style="left:18px;top:841px;width:38px;height:1px;background:#E4E4E4;"></div>
<span class="s" style="left:59px;top:823px;">3357</span>
<span class="s" style="left:110px;top:823px;">2025–09–25</span>
<span class="s" style="left:176px;top:823px;">2025111</span>
<span class="s" style="left:227px;top:823px;">9<i>&nbsp;</i>14<i>&nbsp;</i>18<i>&nbsp;</i>28<i>&nbsp;</i>30<i>&nbsp;</i>33<i>:</i>01</span>
<span class="s" style="left:1192px;top:823px;">0<i>(</i>6<i>)</i></span>
<span class="s" style="left:1259px;top:823px;">5<i>(</i>21<i>)</i></span>
<span class="s" style="left:1315px;top:823px;">4<i>(</i>20<i>)</i></span>
<div style="left:56px;top:842px;width:1302px;height:23px;background:#6AA7EC;border-bottom:1px solid #A0A0A0;"></div>
<div style="left:18px;top:864px;width:38px;height:1px;background:#E4E4E4;"></div>
<span class="s" style="left:59px;top:846px;">3358</span>
<span class="s" style="left:110px;top:846px;">2025–09–28</span>
<span class="s" style="left:176px;top:846px;">2025112</span>
<span class="s" style="left:227px;top:846px;">3<i>&nbsp;</i>9<i>&nbsp;</i>11<i>&nbsp;</i>13<i>&nbsp;</i>20<i>&nbsp;</i>26<i>:</i>16</span>
<span class="s" style="left:1192px;top:846px;"><i>&nbsp;</i><i>&nbsp;</i><i>&nbsp;</i>2<i>)</i></span>
<span class="s" style="left:1259px;top:846px;">3<i>(</i>19<i>)</i></span>
<span class="s" style="left:1315px;top:846px;">5<i>(</i>20<i>)</i></span>
<div style="left:56px;top:152px;width:1px;height:713px;background:#A0A0A0;"></div>
<div style="left:107px;top:152px;width:1px;height:713px;background:#A0A0A0;"></div>
<div style="left:173px;top:152px;width:1px;height:713px;background:#A0A0A0;"></div>
<div style="left:224px;top:152px;width:1px;height:713px;background:#A0A0A0;"></div>
<div style="left:350px;top:152px;width:1px;height:713px;background:#A0A0A0;"></div>
<div style="left:422px;top:152px;width:1px;height:713px;background:#A0A0A0;"></div>
<div style="left:494px;top:152px;width:1px;height:713px;background:#A0A0A0;"></div>
<div style="left:566px;top:152px;width:1px;height:713px;background:#A0A0A0;"></div>
<div style="left:638px;top:152px;width:1px;height:713px;background:#A0A0A0;"></div>
<div style="left:710px;top:152px;width:1px;height:713px;background:#A0A0A0;"></div>
<div style="left:782px;top:152px;width:1px;height:713px;background:#A0A0A0;"></div>
<div style="left:854px;top:152px;width:1px;height:713px;background:#A0A0A0;"></div>
<div style="left:921px;top:152px;width:1px;height:713px;background:#A0A0A0;"></div>
<div style="left:988px;top:152px;width:1px;height:713px;background:#A0A0A0;"></div>
<div style="left:1055px;top:152px;width:1px;height:713px;background:#A0A0A0;"></div>
<div style="left:1122px;top:152px;width:1px;height:713px;background:#A0A0A0;"></div>
<div style="left:1189px;top:152px;width:1px;height:713px;background:#A0A0A0;"></div>
<div style="left:1256px;top:152px;width:1px;height:713px;background:#A0A0A0;"></div>
<div style="left:1312px;top:152px;width:1px;height:713px;background:#A0A0A0;"></div>
<div style="left:1357px;top:152px;width:1px;height:713px;background:#A0A0A0;"></div>
<div style="left:1358px;top:121px;width:17px;height:744px;background:#F8F8F8;"></div>
<div style="left:1359px;top:121px;width:15px;height:14px;background:linear-gradient(#D4DEF8,#BCCBF3);border:1px solid #E8EEFC;border-radius:2px;box-shadow:0 1px 0 #9FB4E0;"><svg width="13" height="11" style="position:absolute;left:0;top:0"><path d="M3 8 L6.5 4.5 L10 8" fill="none" stroke="#4A5C8C" stroke-width="1.8"/></svg></div>
<div style="left:1359px;top:840px;width:15px;height:8px;background:linear-gradient(#D4DEF8,#BCCBF3);border:1px solid #E8EEFC;border-radius:2px;box-shadow:0 1px 0 #9FB4E0;"></div>
<div style="left:1359px;top:851px;width:15px;height:14px;background:linear-gradient(#D4DEF8,#BCCBF3);border:1px solid #E8EEFC;border-radius:2px;box-shadow:0 1px 0 #9FB4E0;"><svg width="13" height="12" style="position:absolute;left:0;top:0"><path d="M3 4.5 L6.5 8 L10 4.5" fill="none" stroke="#4A5C8C" stroke-width="1.8"/></svg></div>
<div style="left:17px;top:865px;width:1341px;height:18px;background:#FAFAFA;"></div>
<div style="left:32px;top:867px;width:900px;height:16px;background:linear-gradient(#D9E2FB,#C4D2F7 40%,#C4D2F7);border:1px solid #EEF2FD;border-radius:2px;"></div>
<div style="left:17px;top:867px;width:14px;height:16px;background:linear-gradient(#D4DEF8,#BCCBF3);border:1px solid #E8EEFC;border-radius:2px;box-shadow:0 1px 0 #9FB4E0;"><svg width="12" height="14" style="position:absolute;left:0;top:0"><path d="M7.5 3.5 L4 7 L7.5 10.5" fill="none" stroke="#5A6C9C" stroke-width="1.8"/></svg></div>
<div style="left:1343px;top:867px;width:14px;height:16px;background:linear-gradient(#D4DEF8,#BCCBF3);border:1px solid #E8EEFC;border-radius:2px;box-shadow:0 1px 0 #9FB4E0;"><svg width="12" height="14" style="position:absolute;left:0;top:0"><path d="M4.5 3.5 L8 7 L4.5 10.5" fill="none" stroke="#5A6C9C" stroke-width="1.8"/></svg></div>
<div style="left:1358px;top:865px;width:17px;height:18px;background:#EFEFEF;"></div>
<div style="left:8px;top:895px;width:1373px;height:1px;background:#5A8DC8;"></div>
<span class="t" style="left:18px;top:895px;font-weight:bold;letter-spacing:1px;"><u style="width:13px">♣</u>当前最新期号<i style="width:7px">:</i><em>2025112</em>于<em>2025</em><i style="width:7px">-</i><em>09</em><i style="width:7px">-</i><em>28</em>开奖<u style="width:13px">♣</u>今</span>
<div style="left:1377px;top:909px;width:2px;height:2px;background:#fff;"></div>
<div style="left:1376px;top:908px;width:2px;height:2px;background:#9AA7C4;"></div>
<div style="left:1373px;top:913px;width:2px;height:2px;background:#fff;"></div>
<div style="left:1372px;top:912px;width:2px;height:2px;background:#9AA7C4;"></div>
<div style="left:1377px;top:913px;width:2px;height:2px;background:#fff;"></div>
<div style="left:1376px;top:912px;width:2px;height:2px;background:#9AA7C4;"></div>
<div style="left:1369px;top:917px;width:2px;height:2px;background:#fff;"></div>
<div style="left:1368px;top:916px;width:2px;height:2px;background:#9AA7C4;"></div>
<div style="left:1373px;top:917px;width:2px;height:2px;background:#fff;"></div>
<div style="left:1372px;top:916px;width:2px;height:2px;background:#9AA7C4;"></div>
<div style="left:1377px;top:917px;width:2px;height:2px;background:#fff;"></div>
<div style="left:1376px;top:916px;width:2px;height:2px;background:#9AA7C4;"></div>
<div style="left:295px;top:223px;width:913px;height:692px;background:#D9E5FB;border:2px solid #5B6FC9;border-top-width:1px;"></div>
<div style="left:297px;top:224px;width:909px;height:689px;border-left:1px solid #EEF3FD;border-right:1px solid #EEF3FD;"></div>
<div style="left:297px;top:224px;width:909px;height:1px;background:#fff;"></div>
<div style="left:297px;top:225px;width:909px;height:19px;background:linear-gradient(#F0F5FE,#BDD0EE);"></div>
<div style="left:297px;top:244px;width:909px;height:17px;background:linear-gradient(#94B6E7,#6190CC);"></div>
<div style="left:297px;top:261px;width:909px;height:1px;background:#7CB0F8;"></div>
<div style="left:297px;top:262px;width:909px;height:1px;background:#3F5C8E;"></div>
<svg style="position:absolute;left:1039px;top:224px" width="166" height="37" viewBox="0 0 166 37">
<path d="M12 37 L35 12 Q44 1 56 1 L166 1 L166 20 L28 20 Z" fill="url(#pu)"/>
<path d="M12 37 L28 20 L166 20 L166 37 Z" fill="url(#pl)"/>
<path d="M11 37 L35 11 Q44 0.5 56 0.5" fill="none" stroke="#F4F8FF" stroke-width="1.6"/>
<path d="M13.5 37 L36 12.5 Q45 2.5 57 2.5" fill="none" stroke="#7F9BCB" stroke-width="1"/>
<path d="M57 1.5 L166 1.5" fill="none" stroke="#E6ECF6" stroke-width="1"/>
<circle cx="119" cy="19.2" r="10.5" fill="url(#bb)" stroke="#4A74CB" stroke-width="1.6"/>
<circle cx="146.2" cy="19.2" r="10.5" fill="url(#bb)" stroke="#4A74CB" stroke-width="1.6"/>
<rect x="115" y="19.6" width="7" height="2.6" fill="#3B5C9C"/>
<path d="M142.7 15.7 L149.7 22.7 M149.7 15.7 L142.7 22.7" stroke="#3B5C9C" stroke-width="2.6"/>
</svg>
<svg style="position:absolute;left:308px;top:232px" width="14" height="14" viewBox="0 0 14 14">
<defs><linearGradient id="iy" x1="0" y1="0" x2="1" y2="1"><stop offset="0" stop-color="#FBE060"/><stop offset="1" stop-color="#DE9C00"/></linearGradient>
<linearGradient id="ib" x1="0" y1="0" x2="0" y2="1"><stop offset="0" stop-color="#6FA0F0"/><stop offset="1" stop-color="#3568CC"/></linearGradient>
<linearGradient id="ir" x1="0" y1="0" x2="1" y2="1"><stop offset="0" stop-color="#F08070"/><stop offset="1" stop-color="#C01818"/></linearGradient></defs>
<rect x="0.5" y="0.5" width="13" height="13" fill="#EEF2FA" stroke="#C9C1B8"/>
<rect x="1" y="4" width="5" height="6" fill="url(#ir)"/><rect x="1" y="4" width="5" height="1" fill="#E03010"/>
<rect x="6" y="1" width="8" height="7" fill="url(#iy)"/>
<rect x="6" y="9" width="8" height="4" fill="url(#ib)"/>
</svg>
<span class="t" style="left:327px;top:233px;font-weight:bold;color:#111;">预测信息</span>
<svg style="position:absolute;left:367px;top:282px" width="28" height="26" viewBox="0 0 28 26">
<defs><linearGradient id="ab" x1="0" y1="0" x2="0" y2="1"><stop offset="0" stop-color="#2F9BE8"/><stop offset="1" stop-color="#1667B8"/></linearGradient>
<linearGradient id="ag" x1="0" y1="0" x2="0" y2="1"><stop offset="0" stop-color="#A6DB3C"/><stop offset="1" stop-color="#5DAE1E"/></linearGradient></defs>
<path d="M2 7.5 L11 1 L11 4.5 C19 4 25 7 26.5 13 C22 9.5 17 9.5 11 10.5 L11 14 Z" fill="url(#ab)"/>
<path d="M26 18 L17 24.8 L17 21.3 C9 21.8 3 19 1.5 13 C6 16.3 11 16.3 17 15.3 L17 11.8 Z" fill="url(#ag)"/>
</svg>
<span class="m" style="left:409px;top:281px;font-family:'Liberation Serif',serif;font-size:23px;line-height:28px;color:#F01818;">E</span>
<span class="m" style="left:423px;top:278.5px;font-family:'Liberation Sans',sans-serif;font-size:23px;line-height:32px;color:#333;font-weight:300;transform:scaleX(1.28);transform-origin:0 0;">等奖</span>
<span class="m" style="left:471px;top:302px;font-family:'Liberation Sans',sans-serif;font-size:12px;line-height:14px;color:#F02828;transform:scaleX(1.17);transform-origin:0 0;">一款真正属于彩民的软件!</span>
<div style="left:309px;top:338px;width:879px;height:557px;border:1px solid #5A8DC8;"></div>
<div style="left:316px;top:331px;width:52px;height:14px;background:#D9E5FB;"></div>
<span class="t" style="left:318px;top:331px;">预测信息</span>
<div class="lab" style="left:316px;top:348px;"><strong>【</strong>红球大范围<strong>】</strong></div>
<div class="inp" style="left:489px;top:352px;width:255px;"><b style="width:249px"><i>&nbsp;</i>15<i>&nbsp;</i>16<i>&nbsp;</i>17<i>&nbsp;</i>18<i>&nbsp;</i>20<i>&nbsp;</i>23<i>&nbsp;</i>24<i>&nbsp;</i>26<i>&nbsp;</i>27<i>&nbsp;</i>28<i>&nbsp;</i>30<i>&nbsp;</i>31<i>&nbsp;</i>32<i>&nbsp;</i>33</b></div>
<div class="lab" style="left:316px;top:373px;"><strong>【</strong>红球小范围<em>2</em><strong>】</strong></div>
<div class="inp" style="left:489px;top:377px;width:255px;"><b style="width:249px">5<i>&nbsp;</i>6<i>&nbsp;</i>10<i>&nbsp;</i>15<i>&nbsp;</i>17<i>&nbsp;</i>20<i>&nbsp;</i>21<i>&nbsp;</i>22<i>&nbsp;</i>24<i>&nbsp;</i>28<i>&nbsp;</i>30</b></div>
<div class="lab" style="left:316px;top:398px;"><strong>【</strong>红球小范围<em>4</em><strong>】</strong></div>
<div class="inp" style="left:489px;top:402px;width:255px;"><b style="width:249px">1<i>&nbsp;</i>3<i>&nbsp;</i>5<i>&nbsp;</i>12<i>&nbsp;</i>14<i>&nbsp;</i>17<i>&nbsp;</i>22<i>&nbsp;</i>24<i>&nbsp;</i>26<i>&nbsp;</i>27<i>&nbsp;</i>29<i>&nbsp;</i>30</b></div>
<div class="lab" style="left:316px;top:423px;"><strong>【</strong>红球小范围<em>6</em><strong>】</strong></div>
<div class="inp" style="left:489px;top:427px;width:255px;"><b style="width:249px">1<i>&nbsp;</i>2<i>&nbsp;</i>3<i>&nbsp;</i>4<i>&nbsp;</i>7<i>&nbsp;</i>8<i>&nbsp;</i>9<i>&nbsp;</i>10<i>&nbsp;</i>18<i>&nbsp;</i>27<i>&nbsp;</i>28<i>&nbsp;</i>33</b></div>
<div class="lab" style="left:316px;top:448px;"><strong>【</strong>红球位<em>1</em>范围<strong>】</strong></div>
<div class="inp" style="left:489px;top:452px;width:255px;"><b style="width:249px">14<i>&nbsp;</i>18<i>&nbsp;</i>23<i>&nbsp;</i>33</b></div>
<div class="lab" style="left:316px;top:473px;"><strong>【</strong>红球位<em>3</em>范围<strong>】</strong></div>
<div class="inp" style="left:489px;top:477px;width:255px;"><b style="width:249px">3<i>&nbsp;</i>6<i>&nbsp;</i>12<i>&nbsp;</i>16<i>&nbsp;</i>23<i>&nbsp;</i>25<i>&nbsp;</i>31</b></div>
<div class="lab" style="left:316px;top:498px;"><strong>【</strong>红球位<em>5</em>范围<strong>】</strong></div>
<div class="inp" style="left:489px;top:502px;width:255px;"><b style="width:249px">4<i>&nbsp;</i>6<i>&nbsp;</i>9<i>&nbsp;</i>10<i>&nbsp;</i>12<i>&nbsp;</i>14<i>&nbsp;</i>19<i>&nbsp;</i>30<i>&nbsp;</i>33</b></div>
<div class="lab" style="left:316px;top:523px;"><strong>【</strong>前<em>5</em>期数<strong>】</strong></div>
<div class="inp" style="left:489px;top:527px;width:255px;"><b style="width:249px">1<i>&nbsp;</i>3<i>&nbsp;</i>5<i>&nbsp;</i>6<i>&nbsp;</i>9<i>&nbsp;</i>11<i>&nbsp;</i>13<i>&nbsp;</i>14<i>&nbsp;</i>16<i>&nbsp;</i>17<i>&nbsp;</i>18<i>&nbsp;</i>19<i>&nbsp;</i>20<i>&nbsp;</i>22<i>&nbsp;</i>28<i>&nbsp;</i>31</b></div>
<div class="lab" style="left:316px;top:548px;"><strong>【</strong>相同日期数<strong>】</strong></div>
<div class="inp" style="left:489px;top:552px;width:255px;"><b style="width:249px">1<i>&nbsp;</i>3<i>&nbsp;</i>5<i>&nbsp;</i>6<i>&nbsp;</i>7<i>&nbsp;</i>8<i>&nbsp;</i>11<i>&nbsp;</i>12<i>&nbsp;</i>14<i>&nbsp;</i>15<i>&nbsp;</i>16<i>&nbsp;</i>17<i>&nbsp;</i>20<i>&nbsp;</i>21<i>&nbsp;</i>24<i>&nbsp;</i>25</b></div>
<div class="lab" style="left:316px;top:573px;"><strong>【</strong>下期热号出号数<strong>】</strong></div>
<div class="inp" style="left:489px;top:577px;width:255px;"><b style="width:249px">6<i>&nbsp;</i>7<i>&nbsp;</i>8<i>&nbsp;</i>12<i>&nbsp;</i>14<i>&nbsp;</i>16<i>&nbsp;</i>17<i>&nbsp;</i>18<i>&nbsp;</i>25</b></div>
<div class="lab" style="left:316px;top:598px;"><strong>【</strong>和值<strong>】</strong></div>
<div class="inp" style="left:489px;top:602px;width:255px;"><b style="width:249px">1<i>&nbsp;</i>4<i>&nbsp;</i>7<i>&nbsp;</i>8<i>&nbsp;</i>10<i>&nbsp;</i>11<i>&nbsp;</i>14<i>&nbsp;</i>17<i>&nbsp;</i>18<i>&nbsp;</i>20<i>&nbsp;</i>21<i>&nbsp;</i>24<i>&nbsp;</i>27<i>&nbsp;</i>28<i>&nbsp;</i>30<i>&nbsp;</i>31</b></div>
<div class="lab" style="left:316px;top:623px;"><strong>【</strong>合值杀<em>6</em>号<strong>】</strong></div>
<div class="inp" style="left:489px;top:627px;width:255px;"><b style="width:249px">4<i>&nbsp;</i>16<i>&nbsp;</i>20<i>&nbsp;</i>26<i>&nbsp;</i>28<i>&nbsp;</i>30</b></div>
<div class="lab" style="left:316px;top:648px;"><strong>【</strong>热号<strong>】</strong></div>
<div class="inp" style="left:489px;top:652px;width:255px;"><b style="width:249px">6</b></div>
<div class="lab" style="left:316px;top:673px;"><strong>【</strong>大乐透减<em>3</em>减<em>4</em>数<strong>】</strong></div>
<div class="inp" style="left:489px;top:677px;width:255px;"><b style="width:249px">1<i>&nbsp;</i>4<i>&nbsp;</i>8<i>&nbsp;</i>10<i>&nbsp;</i>13<i>&nbsp;</i>15<i>&nbsp;</i>22<i>&nbsp;</i>26<i>&nbsp;</i>30<i>&nbsp;</i>31</b></div>
<div class="lab" style="left:316px;top:698px;"><strong>【</strong>七乐彩减<em>8</em>大乐透减<em>9</em><strong>】</strong></div>
<div class="inp" style="left:489px;top:702px;width:255px;"><b style="width:249px">1<i>&nbsp;</i>2<i>&nbsp;</i>6<i>&nbsp;</i>9<i>&nbsp;</i>10<i>&nbsp;</i>16<i>&nbsp;</i>18<i>&nbsp;</i>22<i>&nbsp;</i>23<i>&nbsp;</i>26<i>&nbsp;</i>30</b></div>
<div class="lab" style="left:316px;top:723px;"><strong>【</strong>相同日期数蓝<strong>】</strong></div>
<div class="inp" style="left:489px;top:727px;width:255px;"><b style="width:249px">1<i>&nbsp;</i>7<i>&nbsp;</i>7<i>&nbsp;</i>14<i>&nbsp;</i>14</b></div>
<div class="lab" style="left:316px;top:748px;"><strong>【</strong>上期差距<em>1</em><strong>】</strong></div>
<div class="inp" style="left:489px;top:752px;width:255px;"><b style="width:249px">2<i>&nbsp;</i>4<i>&nbsp;</i>8<i>&nbsp;</i>10<i>&nbsp;</i>12<i>&nbsp;</i>14<i>&nbsp;</i>19<i>&nbsp;</i>21<i>&nbsp;</i>31<i>&nbsp;</i>33</b></div>
<div class="lab" style="left:316px;top:773px;"><strong>【</strong>本期时间同尾范围<strong>】</strong></div>
<div class="inp" style="left:489px;top:777px;width:255px;"><b style="width:249px">10<i>&nbsp;</i>20<i>&nbsp;</i>30</b></div>
<div class="lab" style="left:316px;top:798px;"><strong>【</strong>上期时间同尾范围<strong>】</strong></div>
<div class="inp" style="left:489px;top:802px;width:255px;"><b style="width:249px">8<i>&nbsp;</i>18<i>&nbsp;</i>28</b></div>
<div class="lab" style="left:316px;top:823px;"><strong>【</strong>下期热冷重复出号数<strong>】</strong></div>
<div class="inp" style="left:489px;top:827px;width:255px;"><b style="width:249px">14<i>&nbsp;</i>16</b></div>
<div class="lab" style="left:316px;top:848px;"><strong>【</strong>前<em>5</em>同期数红杀蓝<strong>】</strong></div>
<div class="inp" style="left:489px;top:852px;width:255px;"><b style="width:249px">1<i>&nbsp;</i>2<i>&nbsp;</i>3<i>&nbsp;</i>4<i>&nbsp;</i>5<i>&nbsp;</i>7<i>&nbsp;</i>10<i>&nbsp;</i>13<i>&nbsp;</i>14</b></div>
<div class="lab" style="left:750px;top:348px;"><strong>【</strong>红球小范围<em>1</em><strong>】</strong></div>
<div class="inp" style="left:924px;top:352px;width:258px;"><b style="width:251px">1<i>&nbsp;</i>5<i>&nbsp;</i>6<i>&nbsp;</i>10<i>&nbsp;</i>12<i>&nbsp;</i>13<i>&nbsp;</i>15<i>&nbsp;</i>17<i>&nbsp;</i>19<i>&nbsp;</i>22<i>&nbsp;</i>25<i>&nbsp;</i>30</b></div>
<div class="lab" style="left:750px;top:373px;"><strong>【</strong>红球小范围<em>3</em><strong>】</strong></div>
<div class="inp" style="left:924px;top:377px;width:258px;"><b style="width:251px">2<i>&nbsp;</i>3<i>&nbsp;</i>4<i>&nbsp;</i>10<i>&nbsp;</i>11<i>&nbsp;</i>13<i>&nbsp;</i>15<i>&nbsp;</i>18<i>&nbsp;</i>20<i>&nbsp;</i>26<i>&nbsp;</i>30<i>&nbsp;</i>33</b></div>
<div class="lab" style="left:750px;top:398px;"><strong>【</strong>红球小范围<em>5</em><strong>】</strong></div>
<div class="inp" style="left:924px;top:402px;width:258px;"><b style="width:251px">5<i>&nbsp;</i>20<i>&nbsp;</i>21<i>&nbsp;</i>25<i>&nbsp;</i>26<i>&nbsp;</i>31<i>&nbsp;</i>33</b></div>
<div class="lab" style="left:750px;top:448px;"><strong>【</strong>红球位<em>2</em>范围<strong>】</strong></div>
<div class="inp" style="left:924px;top:452px;width:258px;"><b style="width:251px">5<i>&nbsp;</i>10<i>&nbsp;</i>11<i>&nbsp;</i>13<i>&nbsp;</i>16<i>&nbsp;</i>17<i>&nbsp;</i>25<i>&nbsp;</i>31</b></div>
<div class="lab" style="left:750px;top:473px;"><strong>【</strong>红球位<em>4</em>范围<strong>】</strong></div>
<div class="inp" style="left:924px;top:477px;width:258px;"><b style="width:251px">6<i>&nbsp;</i>11<i>&nbsp;</i>15<i>&nbsp;</i>16<i>&nbsp;</i>18<i>&nbsp;</i>22<i>&nbsp;</i>24<i>&nbsp;</i>25<i>&nbsp;</i>30<i>&nbsp;</i>32</b></div>
<div class="lab" style="left:750px;top:498px;"><strong>【</strong>红球位<em>6</em>范围<strong>】</strong></div>
<div class="inp" style="left:924px;top:502px;width:258px;"><b style="width:251px">3<i>&nbsp;</i>7<i>&nbsp;</i>8<i>&nbsp;</i>10<i>&nbsp;</i>11<i>&nbsp;</i>12<i>&nbsp;</i>14<i>&nbsp;</i>15<i>&nbsp;</i>16<i>&nbsp;</i>20<i>&nbsp;</i>21<i>&nbsp;</i>28<i>&nbsp;</i>30</b></div>
<div class="lab" style="left:750px;top:523px;"><strong>【</strong>前<em>5</em>同期数<strong>】</strong></div>
<div class="inp" style="left:924px;top:527px;width:258px;"><b style="width:251px">1<i>&nbsp;</i>2<i>&nbsp;</i>3<i>&nbsp;</i>4<i>&nbsp;</i>5<i>&nbsp;</i>7<i>&nbsp;</i>10<i>&nbsp;</i>13<i>&nbsp;</i>14<i>&nbsp;</i>18<i>&nbsp;</i>20<i>&nbsp;</i>22<i>&nbsp;</i>23<i>&nbsp;</i>24<i>&nbsp;</i>25<i>&nbsp;</i>26</b></div>
<div class="lab" style="left:750px;top:548px;"><strong>【</strong>出号规律集合<strong>】</strong></div>
<div class="inp" style="left:924px;top:552px;width:258px;"><b style="width:251px">3<i>&nbsp;</i>4<i>&nbsp;</i>5<i>&nbsp;</i>7<i>&nbsp;</i>9<i>&nbsp;</i>10<i>&nbsp;</i>11<i>&nbsp;</i>12<i>&nbsp;</i>13<i>&nbsp;</i>14<i>&nbsp;</i>16<i>&nbsp;</i>17<i>&nbsp;</i>18<i>&nbsp;</i>19<i>&nbsp;</i>20<i>&nbsp;</i>21</b></div>
<div class="lab" style="left:750px;top:573px;"><strong>【</strong>下期冷号出号数<strong>】</strong></div>
<div class="inp" style="left:924px;top:577px;width:258px;"><b style="width:251px">1<i>&nbsp;</i>14<i>&nbsp;</i>16<i>&nbsp;</i>22<i>&nbsp;</i>26<i>&nbsp;</i>27<i>&nbsp;</i>29<i>&nbsp;</i>30<i>&nbsp;</i>32<i>&nbsp;</i>33</b></div>
<div class="lab" style="left:750px;top:598px;"><strong>【</strong>红杀<strong>】</strong></div>
<div class="inp" style="left:924px;top:602px;width:258px;"><b style="width:251px">5<i>&nbsp;</i>9<i>&nbsp;</i>10</b></div>
<div class="lab" style="left:750px;top:623px;"><strong>【</strong>蓝杀<strong>】</strong></div>
<div class="inp" style="left:924px;top:627px;width:258px;"><b style="width:251px">4</b></div>
<div class="lab" style="left:750px;top:648px;"><strong>【</strong>冷号<strong>】</strong></div>
<div class="inp" style="left:924px;top:652px;width:258px;"><b style="width:251px">1</b></div>
<div class="lab" style="left:750px;top:673px;"><strong>【</strong>七乐彩减<em>3</em>数<strong>】</strong></div>
<div class="inp" style="left:924px;top:677px;width:258px;"><b style="width:251px">7<i>&nbsp;</i>8<i>&nbsp;</i>9<i>&nbsp;</i>10<i>&nbsp;</i>13<i>&nbsp;</i>14<i>&nbsp;</i>27<i>&nbsp;</i>29</b></div>
<div class="lab" style="left:750px;top:698px;"><strong>【</strong>前<em>5</em>同期数蓝<strong>】</strong></div>
<div class="inp" style="left:924px;top:702px;width:258px;"><b style="width:251px">2<i>&nbsp;</i>2<i>&nbsp;</i>3<i>&nbsp;</i>11<i>&nbsp;</i>11</b></div>
<div class="lab" style="left:750px;top:723px;"><strong>【</strong>蓝球大范围<strong>】</strong></div>
<div class="inp" style="left:924px;top:727px;width:258px;"><b style="width:251px">3<i>&nbsp;</i>4<i>&nbsp;</i>6<i>&nbsp;</i>7<i>&nbsp;</i>9<i>&nbsp;</i>10<i>&nbsp;</i>13<i>&nbsp;</i>14<i>&nbsp;</i>16</b></div>
<div class="lab" style="left:750px;top:748px;"><strong>【</strong>上<em>4</em>期差距<em>1</em><strong>】</strong></div>
<div class="inp" style="left:924px;top:752px;width:258px;"><b style="width:251px">2<i>&nbsp;</i>4<i>&nbsp;</i>5<i>&nbsp;</i>6<i>&nbsp;</i>7<i>&nbsp;</i>8<i>&nbsp;</i>10<i>&nbsp;</i>12<i>&nbsp;</i>13<i>&nbsp;</i>14<i>&nbsp;</i>15<i>&nbsp;</i>16<i>&nbsp;</i>17<i>&nbsp;</i>18<i>&nbsp;</i>19<i>&nbsp;</i>20</b></div>
<div class="lab" style="left:750px;top:773px;"><strong>【</strong>本期期号同尾范围<strong>】</strong></div>
<div class="inp" style="left:924px;top:777px;width:258px;"><b style="width:251px">3<i>&nbsp;</i>13<i>&nbsp;</i>23<i>&nbsp;</i>33</b></div>
<div class="lab" style="left:750px;top:798px;"><strong>【</strong>上期期号同尾范围<strong>】</strong></div>
<div class="inp" style="left:924px;top:802px;width:258px;"><b style="width:251px">2<i>&nbsp;</i>12<i>&nbsp;</i>22<i>&nbsp;</i>32</b></div>
<div class="lab" style="left:750px;top:823px;"><strong>【</strong>前<em>5</em>期数红杀蓝<strong>】</strong></div>
<div class="inp" style="left:924px;top:827px;width:258px;"><b style="width:251px">1<i>&nbsp;</i>3<i>&nbsp;</i>5<i>&nbsp;</i>6<i>&nbsp;</i>9<i>&nbsp;</i>11<i>&nbsp;</i>13<i>&nbsp;</i>14<i>&nbsp;</i>16</b></div>
<div style="left:1196px;top:897px;width:2px;height:2px;background:#B4B4B4;"></div>
<div style="left:1193px;top:900px;width:2px;height:2px;background:#B4B4B4;"></div>
<div style="left:1196px;top:900px;width:2px;height:2px;background:#B4B4B4;"></div>
<div style="left:1190px;top:903px;width:2px;height:2px;background:#B4B4B4;"></div>
<div style="left:1193px;top:903px;width:2px;height:2px;background:#B4B4B4;"></div>
<div style="left:1196px;top:903px;width:2px;height:2px;background:#B4B4B4;"></div>
</body></html>
